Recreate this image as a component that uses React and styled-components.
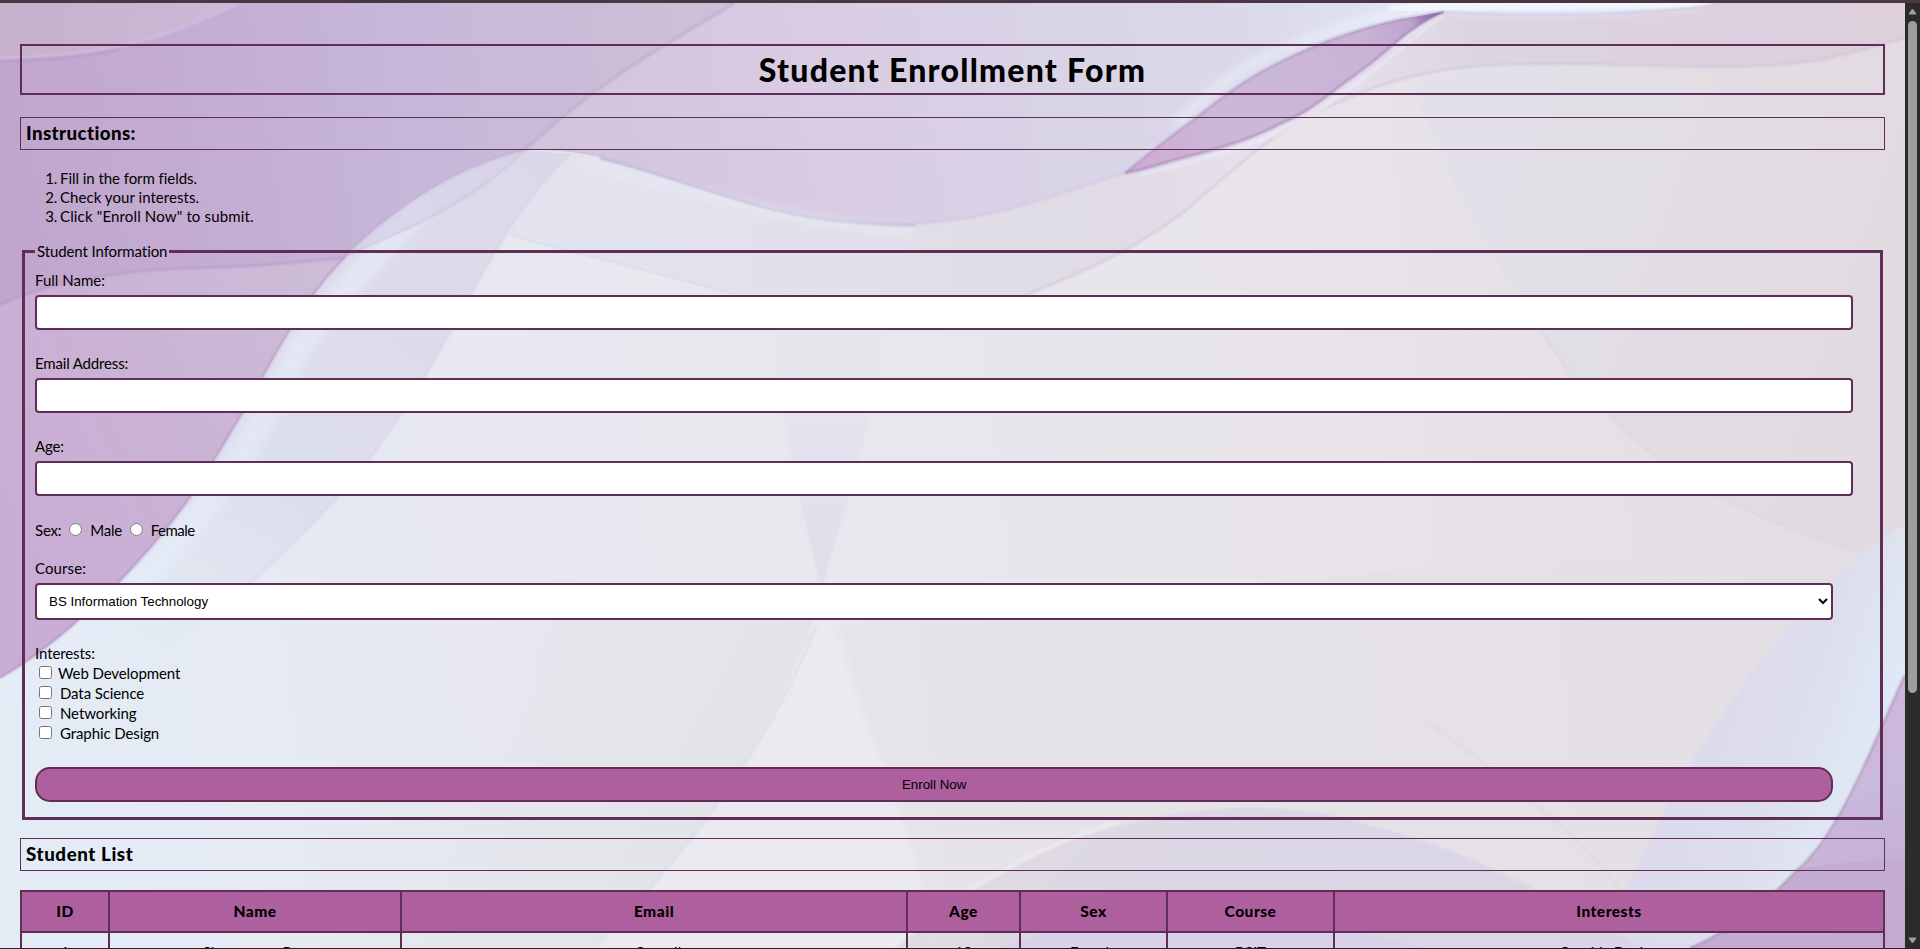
import React from "react";
import styled, { createGlobalStyle } from "styled-components";

const plum = "#5f2d55";
const orchid = "#ae5f9e";

const GlobalStyle = createGlobalStyle`
  * { box-sizing: border-box; }
  body {
    margin: 0;
    color: #000;
    font-family: Lato, "Liberation Sans", sans-serif;
    font-size: 15px;
    line-height: 19px;
    font-variant-ligatures: none;
    overflow: hidden;
  }
`;

const Viewport = styled.div`
  display: flex;
  flex-direction: column;
  width: 1920px;
  height: 949px;
  border-top: 3px solid #4b3744;
  border-bottom: 1px solid #35182e;
`;

const Body = styled.div`
  display: flex;
  flex: 1;
  min-height: 0;
`;

const Page = styled.main`
  position: relative;
  z-index: 0;
  width: 1905px;
  padding: 41px 20px 0;
  overflow: hidden;
`;

const Backdrop = styled.svg`
  position: absolute;
  inset: 0;
  z-index: -1;
  width: 1905px;
  height: 945px;
`;

const Title = styled.h1`
  margin: 0 0 22px;
  padding: 5px;
  border: 2px solid ${plum};
  font-size: 32px;
  font-weight: 900;
  line-height: 37px;
  letter-spacing: 1.25px;
  text-align: center;
`;

const Heading = styled.h3`
  margin: 0;
  padding: 5px;
  border: 1px solid ${plum};
  font-size: 18.72px;
  font-weight: 900;
  line-height: 21px;
  letter-spacing: ${(p) => p.$tracking || 0}px;
`;

const Steps = styled.ol`
  margin: 19px 0 16px;
  padding-left: 40px;
  list-style: none;
  counter-reset: step;
`;

const Step = styled.li`
  counter-increment: step;
  letter-spacing: ${(p) => p.$tracking || 0}px;

  &::before {
    content: counter(step) ".";
    display: inline-block;
    width: 17px;
    margin: 0 3px 0 -20px;
    letter-spacing: -0.2px;
    text-align: right;
  }
`;

const Fieldset = styled.fieldset`
  display: block;
  height: 578px;
  margin: 0 2px 18px;
  padding: 10px;
  border: 3px solid ${plum};
`;

const Legend = styled.legend`
  padding: 0 2px;
  letter-spacing: -0.1px;
`;

const Field = styled.div`
  display: flex;
  flex-direction: column;
  gap: 5px;
  margin-bottom: 24px;
`;

const Label = styled.label`
  letter-spacing: ${(p) => p.$tracking || 0}px;
`;

const TextInput = styled.input`
  box-sizing: content-box;
  width: 98%;
  height: 15px;
  padding: 8px;
  border: 2px solid ${plum};
  border-radius: 4px;
  background: #fff;
`;

const Select = styled.select`
  width: 98%;
  height: 37px;
  padding: 8px;
  border: 2px solid ${plum};
  border-radius: 4px;
  background: #fff;
  color: #000;
  font: 13.333px "Liberation Sans", Arial, sans-serif;
`;

const SexRow = styled.div`
  display: flex;
  height: 19px;
  margin: 25px 0 19px;
`;

const Radio = styled.input`
  width: 13px;
  height: 13px;
  margin: 2px 8px 0 ${(p) => p.$before}px;
`;

const Interests = styled.div`
  display: flex;
  flex-direction: column;
  margin-bottom: 23px;

  > :first-child { margin-bottom: 1px; }
`;

const Interest = styled.label`
  display: flex;
  gap: ${(p) => p.$gap}px;
  height: 20px;
  padding-left: 4px;
  letter-spacing: -0.1px;
`;

const Checkbox = styled.input`
  width: 13px;
  height: 13px;
  margin: 2px 0 0;
`;

const EnrollButton = styled.button`
  display: block;
  width: 98%;
  height: 35px;
  padding: 0;
  border: 2px solid ${plum};
  border-radius: 15px;
  background: ${orchid};
  color: #000;
  font: 13.333px "Liberation Sans", Arial, sans-serif;
`;

const Table = styled.table`
  width: 1865px;
  margin-top: 19px;
  border-collapse: collapse;
  table-layout: fixed;
`;

const HeadCell = styled.th`
  width: ${(p) => p.$width}px;
  height: 41px;
  padding: 0;
  border: 2px solid ${plum};
  background: ${orchid};
  font-size: 15.5px;
  font-weight: 900;
  letter-spacing: 0.5px;
`;

const Cell = styled.td`
  height: 41px;
  padding: 0;
  border: 2px solid ${plum};
  text-align: center;
`;

const ScrollTrack = styled.div`
  display: flex;
  flex-direction: column;
  align-items: center;
  width: 15px;
  padding: 5px 0 4px;
  background: #2b2b2b;
`;

const ScrollThumb = styled.div`
  width: 9px;
  height: 672px;
  margin: 6px 0 auto;
  border-radius: 5px;
  background: #9e9e9e;
`;

const Arrow = ({ down }) => (
  <svg width="9" height="7" viewBox="0 0 9 7">
    <path
      d="M4.5 1 L8 6 H1 Z"
      fill="#9e9e9e"
      stroke="#9e9e9e"
      strokeLinejoin="round"
      transform={down ? "rotate(180 4.5 3.5)" : undefined}
    />
  </svg>
);

const Grad = ({ id, x1 = 0, y1 = 0, x2 = 1905, y2 = 0, stops }) => (
  <linearGradient id={id} gradientUnits="userSpaceOnUse" x1={x1} y1={y1} x2={x2} y2={y2}>
    {stops.map(([offset, color, opacity = 1]) => (
      <stop key={offset} offset={offset} stopColor={color} stopOpacity={opacity} />
    ))}
  </linearGradient>
);

const lowerLeft =
  "C310 291 289 330 262 378 C240 418 216 458 191 496 C167 530 145 555 118 583 C80 620 45 652 0 678";
const leftCurve = `C455 167 395 208 350 252 ${lowerLeft}`;
const bandEdge =
  "C510 215 480 280 452 330 C420 388 395 425 369 461 C337 500 300 540 250 583";
const waveCurve =
  "C600 148 650 172 720 192 C780 212 840 224 915 224 C990 222 1050 195 1125 173";
const ribbonTop =
  "C1150 152 1175 133 1197 117 C1225 94 1250 76 1280 62 C1320 42 1360 28 1402 19 C1420 16 1435 13 1444 12";
const ribbonBottom =
  "C1425 20 1405 34 1392 46 C1370 66 1350 78 1330 94 C1310 109 1300 116 1280 124 C1250 140 1220 148 1190 156 C1165 162 1145 170 1125 173";
const lowerWave =
  "M1025 295 C1100 266 1150 240 1190 207 C1230 172 1260 145 1290 127 C1340 98 1400 72 1480 66 C1600 58 1730 76 1820 60 C1860 52 1880 45 1905 38";
const rightCurve = "C1872 745 1840 835 1795 872 C1760 910 1725 933 1690 948";
const facetCurve =
  "C1440 150 1470 235 1525 303 C1570 390 1650 465 1735 505 C1790 530 1830 545 1868 553";
const innerLeft = "M0 305 C60 278 130 270 200 268 C260 267 300 262 344 258";

function Waves() {
  return (
    <Backdrop viewBox="0 3 1905 945" aria-hidden="true">
      <defs>
        <Grad id="base" y1={700} y2={500} stops={[[0, "#e3ecf5"], [0.24, "#e7e8f1"], [0.46, "#e8e7ed"], [0.7, "#e8e4ea"], [1, "#e4dde3"]]} />
        <Grad id="mauve" x2={680} y1={160} y2={60} stops={[[0, "#c1a5cc"], [0.3, "#c4add2"], [0.6, "#c6b7d9"], [1, "#ccbfd7"]]} />
        <Grad id="mauveLow" y1={480} x2={350} y2={300} stops={[[0, "#caadd5"], [0.5, "#cab4d4"], [1, "#cdbdd8"]]} />
        <Grad id="corner" x2={240} y2={60} stops={[[0, "#c5b1cc"], [1, "#ccbad8"]]} />
        <Grad id="lilac" x1={560} x2={1430} y1={140} y2={10} stops={[[0, "#d3c4de"], [0.25, "#d8cae2"], [0.55, "#d9d3e6"], [0.82, "#dbdae9"], [1, "#e4e7f4"]]} />
        <Grad id="bandFade" x1={525} y1={150} x2={150} y2={690} stops={[[0, "#dcd8e9", 1], [0.3, "#dddbe9", 1], [0.65, "#dddfed", 1], [0.85, "#dfe5f0", 0.7], [1, "#e3edf6", 0]]} />
        <Grad id="veil" x1={480} x2={1300} y1={180} y2={180} stops={[[0, "#e3e4f0"], [0.5, "#e1dfe9"], [0.8, "#e0dbe5"], [1, "#e8e4ef"]]} />
        <Grad id="blush" x1={1300} x2={1905} y1={80} y2={20} stops={[[0, "#e8e3ed"], [0.3, "#dcd5e0"], [0.75, "#dccfdf"], [1, "#ddd0da"]]} />
        <Grad id="ribbon" x1={1130} y1={170} x2={1444} y2={12} stops={[[0, "#cfabd5"], [0.3, "#cbb8d6"], [0.75, "#cab4d6"], [0.9, "#bfa5cd"], [1, "#71548f"]]} />
        <Grad id="facet" x1={1440} y1={200} x2={1850} y2={340} stops={[[0, "#e2e1e9"], [0.5, "#e2dee4"], [1, "#e2dae1"]]} />
        <Grad id="blueBand" x1={1690} y1={740} x2={1860} y2={800} stops={[[0, "#dcdaec"], [0.55, "#dedfed"], [1, "#e0e9f6"]]} />
        <Grad id="plumCorner" x1={1800} y1={700} x2={1905} y2={940} stops={[[0, "#d2b5da"], [0.4, "#c9b9dc"], [1, "#c3aad0"]]} />
        <Grad id="arch" x1={980} y1={810} x2={1100} y2={948} stops={[[0, "#ddd3df"], [0.5, "#dcd5e1"], [1, "#d8d2e5"]]} />
        <Grad id="dart" y1={300} x2={0} y2={590} stops={[[0, "#e5e5ea", 0.3], [0.5, "#e2e3ee"], [1, "#dfdfeb"]]} />
        <Grad id="slate" x1={420} y1={640} x2={760} y2={820} stops={[[0, "#e2e5e8", 0], [1, "#e1e3e7", 0.9]]} />
        <filter id="soft" x="-10%" y="-10%" width="120%" height="120%">
          <feGaussianBlur stdDeviation="5" />
        </filter>
        <filter id="fine" x="-10%" y="-10%" width="120%" height="120%">
          <feGaussianBlur stdDeviation="1" />
        </filter>
      </defs>

      <rect x="0" y="3" width="1905" height="945" fill="url(#base)" />

      <path d="M818 610 C780 720 715 820 625 915 L600 948 L200 948 L420 560 Z" fill="url(#slate)" />
      <path d="M840 625 C862 710 900 800 925 890 L935 948 L1700 948 L1905 560 L1500 560 Z" fill="#e2e0e4" opacity=".38" filter="url(#fine)" />
      <path d="M818 610 C780 720 715 820 625 915 L600 948 L940 948 C910 830 865 740 828 610 Z" fill="#ebeaf0" filter="url(#fine)" />
      <path d="M816 626 C780 720 715 820 625 915" fill="none" stroke="#d9d8e8" strokeWidth="3" opacity=".6" filter="url(#fine)" />
      <path d="M768 260 C775 400 798 500 822 590 C845 500 880 420 892 260 Z" fill="url(#dart)" filter="url(#fine)" />

      <path d={`M525 150 ${waveCurve} L1290 62 L1444 12 L1905 12 L1905 38 C1880 45 1860 52 1820 60 C1730 76 1600 58 1480 66 C1400 72 1340 98 1290 127 C1260 145 1230 172 1190 207 C1150 240 1100 266 1025 295 L735 295 C650 270 580 255 510 235 Z`} fill="url(#veil)" />
      <path d="M510 235 C580 255 650 270 735 295" fill="none" stroke="#d8d6e8" strokeWidth="2" opacity=".5" />

      <path d={`M1410 84 ${facetCurve} L1905 525 L1905 38 C1880 45 1860 52 1820 60 C1730 76 1600 58 1480 66 Z`} fill="url(#facet)" filter="url(#fine)" />
      <path d="M1525 303 C1570 390 1650 465 1735 505 C1790 530 1830 545 1868 553" fill="none" stroke="#d6d2dc" strokeWidth="2" opacity=".6" filter="url(#fine)" />
      <path d="M1444 12 C1550 16 1680 12 1720 3 L1905 3 L1905 38 C1880 45 1860 52 1820 60 C1730 76 1600 58 1480 66 C1400 72 1340 98 1290 127 L1270 140 Z" fill="url(#blush)" />
      <path d={lowerWave} fill="none" stroke="#cdc2d6" strokeWidth="2" opacity=".7" filter="url(#fine)" />

      <path d={`M735 3 C690 32 610 70 525 150 ${waveCurve} ${ribbonTop} C1550 18 1680 12 1720 3 Z`} fill="url(#lilac)" />
      <path d="M1175 124 C1215 88 1240 68 1278 52 C1345 22 1400 12 1444 7 C1550 12 1640 8 1700 4" fill="none" stroke="#edf2ff" strokeWidth="9" opacity=".65" filter="url(#soft)" />
      <path d="M1390 10 C1440 3 1550 8 1710 2" fill="none" stroke="#f2f6ff" strokeWidth="8" opacity=".9" filter="url(#fine)" />
      <path d="M1446 12 C1550 17 1680 13 1720 3" fill="none" stroke="#c8c1df" strokeWidth="2" opacity=".7" filter="url(#fine)" />
      <path d="M600 158 C640 167 680 182 720 194 C780 214 830 224 915 225" fill="none" stroke="#aaa3c6" strokeWidth="2" opacity=".9" filter="url(#fine)" />
      <path d="M580 164 C640 178 750 215 915 234" fill="none" stroke="#eceefa" strokeWidth="9" opacity=".5" filter="url(#soft)" />
      <path d="M880 225 C990 226 1050 195 1125 173" fill="none" stroke="#d3c5e4" strokeWidth="2" opacity=".8" filter="url(#fine)" />
      <path d={`M1125 173 ${ribbonTop} ${ribbonBottom} Z`} fill="url(#ribbon)" />
      <path d={`M1125 173 ${ribbonTop}`} fill="none" stroke="#9a83b4" strokeWidth="1.8" opacity=".6" filter="url(#fine)" />
      <path d={`M1444 12 ${ribbonBottom}`} fill="none" stroke="#9c7ab0" strokeWidth="2" opacity=".7" filter="url(#fine)" />
      <path d="M1444 15 C1410 39 1366 80 1334 99 C1284 140 1210 158 1140 175" fill="none" stroke="#f0ecfc" strokeWidth="3" opacity=".6" filter="url(#fine)" />

      <path d={`M525 150 ${leftCurve} L0 740 C90 715 180 640 250 583 C300 540 337 500 369 461 C395 425 420 388 452 330 C480 280 510 215 570 154 Z`} fill="url(#bandFade)" />
      <path d="M430 200 C375 255 330 305 302 345 C262 425 225 490 170 550 C110 615 60 665 5 696" fill="none" stroke="#e7edfa" strokeWidth="24" opacity=".6" filter="url(#soft)" />
      <path d="M525 150 C470 205 420 225 350 254 C400 200 460 165 525 150 Z" fill="#d7d1e8" opacity=".75" />
      <path d="M525 150 C480 195 420 225 350 254" fill="none" stroke="#c8bfdc" strokeWidth="2" opacity=".6" filter="url(#fine)" />
      <path d={`M570 154 ${bandEdge}`} fill="none" stroke="#d3d1e5" strokeWidth="3" opacity=".35" filter="url(#fine)" />

      <path d={`M0 3 L735 3 C690 32 610 70 525 150 ${leftCurve} Z`} fill="url(#mauve)" />
      <path d={`${innerLeft} L350 252 ${lowerLeft} Z`} fill="url(#mauveLow)" />
      <path d={innerLeft} fill="none" stroke="#ab8bc2" strokeWidth="2" opacity=".5" filter="url(#fine)" />
      <path d="M0 3 H240 C180 30 125 58 0 59 Z" fill="url(#corner)" />
      <path d="M0 58 C125 57 180 30 240 3" fill="none" stroke="#d0bee1" strokeWidth="3" opacity=".7" filter="url(#fine)" />
      <path d="M0 61 C50 60 90 56 120 49" fill="none" stroke="#aa82bd" strokeWidth="2" opacity=".4" filter="url(#fine)" />
      <path d="M735 3 C690 32 610 70 525 150" fill="none" stroke="#b6a1c4" strokeWidth="2" opacity=".75" filter="url(#fine)" />
      <path d={`M350 252 ${lowerLeft}`} fill="none" stroke="#b08bbb" strokeWidth="2" opacity=".65" filter="url(#fine)" />
      <path d="M525 150 C455 167 395 208 350 252" fill="none" stroke="#b9a6cc" strokeWidth="2" opacity=".4" filter="url(#fine)" />

      <path d="M1905 525 C1840 565 1790 625 1750 675 C1710 730 1680 775 1655 832 L1625 890 L1560 948 H1690 C1725 933 1760 910 1795 872 C1840 835 1872 745 1905 675 Z" fill="url(#blueBand)" filter="url(#fine)" />
      <path d={`M1905 675 ${rightCurve} H1905 Z`} fill="url(#plumCorner)" />
      <path d="M1905 858 C1870 860 1830 864 1799 869 C1760 908 1725 933 1690 948 H1905 Z" fill="#c2a9d0" opacity=".75" />
      <path d={`M1905 675 ${rightCurve}`} fill="none" stroke="#a58eb4" strokeWidth="2" opacity=".75" filter="url(#fine)" />

      <path d="M895 948 C970 890 1040 845 1120 825 C1200 804 1290 800 1370 825 C1470 850 1550 895 1640 948 Z" fill="url(#arch)" opacity=".7" filter="url(#fine)" />
      <path d="M890 948 C965 888 1040 843 1120 822" fill="none" stroke="#eeecf1" strokeWidth="4" opacity=".6" filter="url(#fine)" />
      <path d="M1000 948 C1060 924 1130 915 1190 915 C1280 915 1360 930 1425 948 Z" fill="#d7d0e7" opacity=".8" />
      <path d="M1425 720 C1510 780 1580 835 1622 892" fill="none" stroke="#dcd2dc" strokeWidth="3" opacity=".4" filter="url(#fine)" />
    </Backdrop>
  );
}

const steps = [
  ["Fill in the form fields.", -0.05],
  ["Check your interests.", 0.05],
  ['Click "Enroll Now" to submit.', 0.15],
];

const textFields = [
  { id: "name", label: "Full Name:", tracking: 0 },
  { id: "email", label: "Email Address:", tracking: -0.16 },
  { id: "age", label: "Age:", tracking: -0.2 },
];

const interests = ["Web Development", "Data Science", "Networking", "Graphic Design"];

const columns = [
  ["ID", 88],
  ["Name", 292],
  ["Email", 506],
  ["Age", 113],
  ["Sex", 147],
  ["Course", 167],
  ["Interests", 550],
];

const student = ["1", "Shannamae Pua", "sanne@gmail.com", "19", "Female", "BSIT", "Graphic Design"];

export default function App() {
  return (
    <Viewport>
      <GlobalStyle />
      <Body>
        <Page>
          <Waves />
          <Title>Student Enrollment Form</Title>
          <Heading $tracking={0.4}>Instructions:</Heading>
          <Steps>
            {steps.map(([text, tracking]) => (
              <Step key={text} $tracking={tracking}>{text}</Step>
            ))}
          </Steps>
          <Fieldset>
            <Legend>Student Information</Legend>
            {textFields.map((f) => (
              <Field key={f.id}>
                <Label htmlFor={f.id} $tracking={f.tracking}>{f.label}</Label>
                <TextInput id={f.id} />
              </Field>
            ))}
            <SexRow>
              <Label $tracking={-0.2}>Sex:</Label>
              <Radio type="radio" name="sex" id="male" $before={8} />
              <Label htmlFor="male" $tracking={-0.3}>Male</Label>
              <Radio type="radio" name="sex" id="female" $before={8} />
              <Label htmlFor="female" $tracking={-0.5}>Female</Label>
            </SexRow>
            <Field>
              <Label htmlFor="course" $tracking={0.1}>Course:</Label>
              <Select id="course" defaultValue="it">
                <option value="it">BS Information Technology</option>
              </Select>
            </Field>
            <Interests>
              <Label $tracking={-0.1}>Interests:</Label>
              {interests.map((name, i) => (
                <Interest key={name} $gap={i === 0 ? 6 : 8}>
                  <Checkbox type="checkbox" />
                  {name}
                </Interest>
              ))}
            </Interests>
            <EnrollButton type="button">Enroll Now</EnrollButton>
          </Fieldset>
          <Heading $tracking={0.6}>Student List</Heading>
          <Table>
            <thead>
              <tr>
                {columns.map(([name, width]) => (
                  <HeadCell key={name} $width={width}>{name}</HeadCell>
                ))}
              </tr>
            </thead>
            <tbody>
              <tr>
                {student.map((value) => (
                  <Cell key={value}>{value}</Cell>
                ))}
              </tr>
            </tbody>
          </Table>
        </Page>
        <ScrollTrack>
          <Arrow />
          <ScrollThumb />
          <Arrow down />
        </ScrollTrack>
      </Body>
    </Viewport>
  );
}
